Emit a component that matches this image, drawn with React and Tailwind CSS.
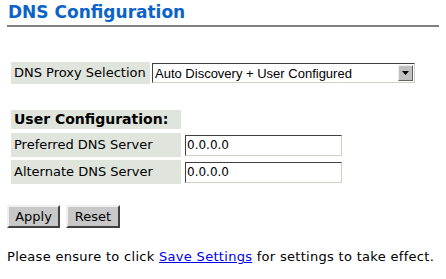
import React, { useState } from 'react'

const cellBg = 'bg-[#dfe4dd]'

const App = () => {
  const [proxy, setProxy] = useState('auto')
  const [preferred, setPreferred] = useState('0.0.0.0')
  const [alternate, setAlternate] = useState('0.0.0.0')

  return (
    <div className="w-[446px] h-[279px] bg-white px-[7px] pt-[2px] text-[13px] text-black font-['DejaVu_Sans',sans-serif]">
      <h1 className="pl-[1px] text-[17px] font-bold leading-[20px] text-[#0b63c9]">DNS Configuration</h1>
      <div className="mt-[3px] h-[2px] border-t-2 border-[#808080]"></div>

      <div className="mt-[35px] ml-[4px] flex items-center">
        <div className={`${cellBg} h-[22px] w-[139px] pl-[3px] flex items-center`}>DNS Proxy Selection</div>
        <div className="ml-[2px] relative h-[20px] w-[263px] border border-t-[#404040] border-l-[#404040] border-r-[#d4d0c8] border-b-[#d4d0c8] bg-white flex items-center">
          <select
            value={proxy}
            onChange={(e) => setProxy(e.target.value)}
            className="appearance-none w-full h-full pl-[2px] text-[13px] font-['Liberation_Sans',sans-serif] outline-none bg-transparent"
          >
            <option value="auto">Auto Discovery + User Configured</option>
            <option value="user">User Configured</option>
            <option value="disc">Auto Discovery</option>
          </select>
          <div className="absolute right-[1px] top-[1px] h-[16px] w-[15px] bg-[#c0c0c0] border border-t-[#f0f0f0] border-l-[#f0f0f0] border-r-[#606060] border-b-[#606060] flex items-center justify-center pointer-events-none">
            <svg width="7" height="4" viewBox="0 0 7 4"><path d="M0 0h7L3.5 4z" fill="#000" /></svg>
          </div>
        </div>
      </div>

      <div className="mt-[26px] ml-[4px] flex flex-col">
        <div className={`${cellBg} h-[19px] w-[170px] pl-[3px] flex items-center font-bold text-[14px]`}>User Configuration:</div>
        <div className="mt-[4px] flex items-center gap-[4px]">
          <div className={`${cellBg} h-[24px] w-[170px] pl-[3px] flex items-center`}>Preferred DNS Server</div>
          <input
            value={preferred}
            onChange={(e) => setPreferred(e.target.value)}
            className="h-[21px] w-[157px] border border-t-[#404040] border-l-[#404040] border-r-[#d4d0c8] border-b-[#d4d0c8] px-[1px] text-[12px] outline-none"
          />
        </div>
        <div className="mt-[3px] flex items-center gap-[4px]">
          <div className={`${cellBg} h-[24px] w-[170px] pl-[3px] flex items-center`}>Alternate DNS Server</div>
          <input
            value={alternate}
            onChange={(e) => setAlternate(e.target.value)}
            className="h-[21px] w-[157px] border border-t-[#404040] border-l-[#404040] border-r-[#d4d0c8] border-b-[#d4d0c8] px-[1px] text-[12px] outline-none"
          />
        </div>
      </div>

      <div className="mt-[21px] flex gap-[6px]">
        <button className="h-[23px] w-[53px] bg-[#c8c8c8] border-2 border-t-[#f0f0f0] border-l-[#f0f0f0] border-r-[#404040] border-b-[#404040] text-[13px]">Apply</button>
        <button className="h-[23px] w-[54px] bg-[#c8c8c8] border-2 border-t-[#f0f0f0] border-l-[#f0f0f0] border-r-[#404040] border-b-[#404040] text-[13px]">Reset</button>
      </div>

      <p className="mt-[21px] text-[13px] leading-[16px] tracking-[0.3px]">
        Please ensure to click <a href="#" className="text-[#0000ee] underline">Save Settings</a> for settings to take effect.
      </p>
    </div>
  )
}

export default App
